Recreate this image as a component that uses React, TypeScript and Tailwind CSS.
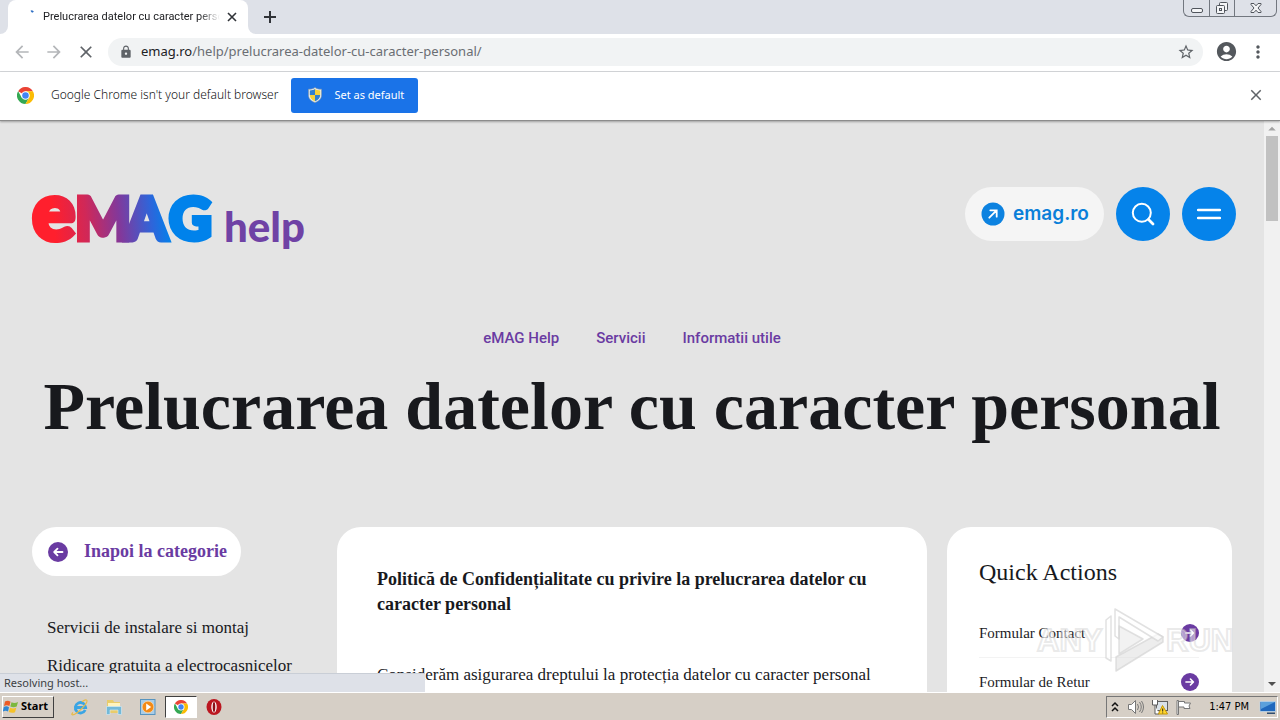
import React from "react";
import {
  MdAccountCircle,
  MdArrowBack,
  MdArrowForward,
  MdClose,
  MdLock,
  MdMoreVert,
  MdStarBorder,
} from "react-icons/md";

const UI = "font-['Noto_Sans',sans-serif]";

function ChromeLogo({ className }: { className: string }) {
  return (
    <svg viewBox="0 0 48 48" className={className} aria-hidden="true">
      <path d="M24 24 3.2 12A24 24 0 0 1 44.8 12L24 12z" fill="#ea4335" />
      <path d="M3.2 12A24 24 0 0 0 24 48L34.4 30 24 24 13.6 30z" fill="#34a853" />
      <path d="M44.8 12A24 24 0 0 1 24 48L34.4 30 24 12z" fill="#fbbc04" />
      <circle cx="24" cy="24" r="12" fill="#fff" />
      <circle cx="24" cy="24" r="9.2" fill="#4285f4" />
    </svg>
  );
}

function Shield() {
  return (
    <svg viewBox="0 0 16 16" className="size-4" aria-hidden="true">
      <path d="M8 0.500C6 2 4 2.200 1.500 2.200V8c0 3.800 2.600 6.200 6.500 7.500 3.900-1.300 6.500-3.700 6.500-7.500V2.200C12 2.200 10 2 8 .5z" fill="#e8eef2" stroke="#8796a3" strokeWidth=".6" />
      <path d="M8 2C6.400 3 5 3.300 2.800 3.400V8H8z" fill="#2f7fd0" />
      <path d="M8 2c1.600 1 3 1.300 5.200 1.400V8H8z" fill="#f6d13a" />
      <path d="M2.800 8c0 3 2 5 5.200 6.200V8z" fill="#f6d13a" />
      <path d="M13.200 8c0 3-2 5-5.200 6.200V8z" fill="#2f7fd0" />
    </svg>
  );
}

function WindowButtons() {
  const box = "flex h-[17px] items-center justify-center border-b border-[#72777f]";
  return (
    <div className="flex self-start text-[#50555c]">
      <button aria-label="Minimize" className={`${box} w-[26px] rounded-bl-md border-l`}>
        <svg viewBox="0 0 24 16" className="h-4 w-6"><rect x="6.500" y="8.500" width="11" height="4" rx="1.500" fill="#f4f5f7" stroke="currentColor" /></svg>
      </button>
      <button aria-label="Restore" className={`${box} w-[25px] border-l`}>
        <svg viewBox="0 0 24 16" className="h-4 w-6" fill="#f4f5f7" stroke="currentColor">
          <rect x="9.500" y="2.500" width="8" height="8" rx="1" />
          <rect x="6.500" y="5.500" width="8" height="8" rx="1" />
          <rect x="9.500" y="8.500" width="2" height="2" />
        </svg>
      </button>
      <button aria-label="Close window" className={`${box} w-[43px] rounded-br-md border-x`}>
        <svg viewBox="0 0 16 16" className="size-4" fill="#f4f5f7" stroke="currentColor">
          <path d="M3 3.500h3l2 2.300 2-2.300h3v1L10 8l3 3.500v1h-3l-2-2.300-2 2.300H3v-1L6 8 3 4.500z" />
        </svg>
      </button>
    </div>
  );
}

function TabStrip() {
  return (
    <div className={`flex h-[34px] items-end bg-[#dee1e8] pr-[3px] ${UI}`}>
      <div className="h-2 w-2 bg-white"><div className="h-2 w-2 rounded-br-lg bg-[#dee1e8]" /></div>
      <div className="flex h-full w-60 items-center rounded-t-lg bg-white pr-1.5 pl-4">
        <svg viewBox="0 0 16 16" className="size-4 shrink-0" fill="none" stroke="#2f6fc4" strokeWidth="2" aria-hidden="true">
          <path d="M7 2.500Q8.200 1.800 9 3.300" />
        </svg>
        <span className="ml-[3px] min-w-0 flex-1 overflow-hidden font-['Roboto',sans-serif] text-[11px] whitespace-nowrap text-[#202124] [mask-image:linear-gradient(to_right,black_88%,transparent)]">
          Prelucrarea datelor cu caracter personal
        </span>
        <button aria-label="Close tab" className="ml-0.5 flex size-5 items-center justify-center text-[#303338]">
          <svg viewBox="0 0 14 14" className="size-3.5" stroke="currentColor" strokeWidth="1.600"><path d="M3 3l8 8M11 3l-8 8" /></svg>
        </button>
      </div>
      <div className="h-2 w-2 bg-white"><div className="h-2 w-2 rounded-bl-lg bg-[#dee1e8]" /></div>
      <button aria-label="New tab" className="ml-1 flex h-full w-5 items-center justify-center text-[#303338]">
        <svg viewBox="0 0 20 20" className="size-5 shrink-0" stroke="currentColor" strokeWidth="2"><path d="M10 4v12M4 10h12" /></svg>
      </button>
      <div className="flex-1" />
      <WindowButtons />
    </div>
  );
}

function Toolbar() {
  return (
    <div className={`flex h-[38px] items-center border-b border-[#d5d7da] bg-white px-3 pb-0.5 ${UI}`}>
      <div className="flex gap-3 text-[#5f6368]">
        <button aria-label="Back" className="text-[#b4b6b9]"><MdArrowBack className="size-5" /></button>
        <button aria-label="Forward" className="text-[#b4b6b9]"><MdArrowForward className="size-5" /></button>
        <button aria-label="Stop"><MdClose className="size-5" /></button>
      </div>
      <div className="ml-3 flex h-7 flex-1 items-center rounded-full bg-[#f1f3f4] pr-2 pl-[11px] text-[13px]">
        <MdLock className="mr-2 size-3.5 text-[#5f6368]" />
        <div role="textbox" aria-label="Address" className="flex-1 text-[#6a6e73]">
          <span className="text-[#202124]">emag.ro</span>/help/prelucrarea-datelor-cu-caracter-personal/
        </div>
        <button aria-label="Bookmark this page" className="text-[#5f6368]"><MdStarBorder className="size-[18px]" /></button>
      </div>
      <button aria-label="Profile" className="ml-3 text-[#54585d]"><MdAccountCircle className="size-[23px]" /></button>
      <button aria-label="Menu" className="ml-2.5 text-[#54585d]"><MdMoreVert className="size-5" /></button>
    </div>
  );
}

function InfoBar() {
  return (
    <div className={`z-10 flex h-[49px] items-center border-b border-[#8c8c8c] bg-white pr-[15px] pb-0.5 pl-[17px] shadow-[0_1px_2px_rgba(0,0,0,0.3)] ${UI}`}>
      <ChromeLogo className="size-[17px]" />
      <p className="mr-[13px] ml-[17px] text-[12px] font-light whitespace-nowrap text-[#101214]">Google Chrome isn't your default browser</p>
      <button className="flex h-[35px] w-[127px] items-center rounded-[3px] bg-[#1a73e8] pl-4 text-[11px] text-white">
        <Shield />
        <span className="ml-[11px] whitespace-nowrap">Set as default</span>
      </button>
      <div className="flex-1" />
      <button aria-label="Dismiss" className="text-[#5f6368]"><MdClose className="size-[18px]" /></button>
    </div>
  );
}

function EmagLogo() {
  return (
    <svg viewBox="0 0 276 60" className="h-[60px] w-[276px] overflow-visible" role="img" aria-label="eMAG help">
      <defs>
        <linearGradient id="brand" gradientUnits="userSpaceOnUse" x1="0" y1="28" x2="180" y2="10">
          <stop offset="0.120" stopColor="#ff1f2d" />
          <stop offset="0.300" stopColor="#d02858" />
          <stop offset="0.480" stopColor="#83389a" />
          <stop offset="0.660" stopColor="#2e65da" />
          <stop offset="0.760" stopColor="#0082eb" />
        </linearGradient>
      </defs>
      <text y="45" fill="url(#brand)" stroke="url(#brand)" strokeWidth="5" fontFamily="Lato, sans-serif" fontWeight="900" fontSize="59">
        <tspan x="0" fontSize="81">e</tspan>
        <tspan x="43">M</tspan>
        <tspan x="94">A</tspan>
        <tspan x="137">G</tspan>
      </text>
      <text x="192" y="47" fill="#6f42a5" fontFamily="Lato, sans-serif" fontWeight="900" fontSize="42">help</text>
    </svg>
  );
}

function ArrowDot({ back = false }: { back?: boolean }) {
  return (
    <svg viewBox="0 0 20 20" className={back ? "size-5 rotate-180" : "size-[18px]"} aria-hidden="true">
      <circle cx="10" cy="10" r="10" fill="#6a3ba2" />
      <path d="M5.500 10h8M10.500 6.700l3.300 3.300-3.300 3.300" fill="none" stroke="#fff" strokeWidth="1.800" strokeLinecap="round" strokeLinejoin="round" />
    </svg>
  );
}

function SiteHeader() {
  return (
    <header className="flex items-start justify-between pt-[66px] pr-7 pl-8">
      <a href="#home" className="pt-2"><EmagLogo /></a>
      <div className="flex gap-3">
        <a href="#emag" className="flex h-[54px] w-[139px] items-center gap-2 rounded-full bg-[#f5f5f5] pl-4 font-['Inter',sans-serif] text-[19px] font-semibold text-[#0a7fd9]">
          <svg viewBox="0 0 24 24" className="size-6" aria-hidden="true">
            <circle cx="12" cy="12" r="11.500" fill="#0c82e0" />
            <path d="M8.300 15.700l7-7M9.300 8.300h6.400v6.400" fill="none" stroke="#fff" strokeWidth="1.800" strokeLinecap="round" />
          </svg>
          <span>emag.ro</span>
        </a>
        <button aria-label="Search" className="flex size-[54px] items-center justify-center rounded-full bg-[#0583ea]">
          <svg viewBox="0 0 24 24" className="size-6" fill="none" stroke="#fff" strokeLinecap="round">
            <circle cx="10.800" cy="10.800" r="9" strokeWidth="2" />
            <path d="M17.500 17.500l4.500 4.500" strokeWidth="2.800" />
          </svg>
        </button>
        <button aria-label="Open menu" className="flex size-[54px] items-center justify-center rounded-full bg-[#0583ea]">
          <svg viewBox="0 0 24 24" className="size-6" stroke="#fff" strokeWidth="2.400" strokeLinecap="round"><path d="M1 8h22M1 16h22" /></svg>
        </button>
      </div>
    </header>
  );
}

function QuickAction({ label }: { label: string }) {
  return (
    <li>
      <a href="#action" className="flex h-[49px] items-center justify-between border-b border-[#f3f3f3] text-[15px] text-[#1c1c1f]">
        {label}
        <ArrowDot />
      </a>
    </li>
  );
}

function Page() {
  return (
    <main className="h-full min-w-0 flex-1 overflow-hidden bg-[#e4e4e4] font-['Liberation_Serif',serif] text-[#18191d]">
      <SiteHeader />
      <nav className="mt-[71px] flex h-6 items-center justify-center gap-[37px] font-['Roboto',sans-serif] text-[15px] font-medium text-[#6a3ba2]">
        <a href="#help">eMAG Help</a>
        <a href="#servicii">Servicii</a>
        <a href="#informatii">Informatii utile</a>
      </nav>
      <h1 className="mt-4 text-center text-[68px] leading-[80px] font-bold whitespace-nowrap">Prelucrarea datelor cu caracter personal</h1>
      <div className="mt-[81px] flex items-start pr-8 pl-8">
        <aside className="w-[305px] shrink-0">
          <a href="#categorie" className="inline-flex h-[49px] items-center gap-4 rounded-full bg-white pr-3.5 pl-4 text-lg font-bold whitespace-nowrap text-[#6a3ba2]">
            <ArrowDot back />
            <span className="pb-0.5">Inapoi la categorie</span>
          </a>
          <ul className="mt-[33px] flex flex-col pl-[15px] text-[17px] whitespace-nowrap">
            <li className="flex h-[38px] items-center"><a href="#instalare">Servicii de instalare si montaj</a></li>
            <li className="flex h-[38px] items-center"><a href="#ridicare">Ridicare gratuita a electrocasnicelor</a></li>
          </ul>
        </aside>
        <article className="h-96 min-w-0 flex-1 rounded-3xl bg-white px-10 pt-10 text-[17px] leading-[25px]">
          <h2 className="text-lg leading-[25px] font-bold">Politică de Confidențialitate cu privire la prelucrarea datelor cu caracter personal</h2>
          <p className="mt-[45px] whitespace-nowrap">Considerăm asigurarea dreptului la protecția datelor cu caracter personal</p>
        </article>
        <section className="ml-5 h-96 w-[285px] shrink-0 rounded-3xl bg-white pt-[27px] pr-[33px] pl-8">
          <h2 className="text-2xl leading-9">Quick Actions</h2>
          <ul className="mt-[19px]">
            <QuickAction label="Formular Contact" />
            <QuickAction label="Formular de Retur" />
          </ul>
        </section>
      </div>
    </main>
  );
}

function ScrollBar() {
  return (
    <div className="flex w-4 shrink-0 flex-col items-center bg-[#f1f1f1]">
      <svg viewBox="0 0 16 16" className="h-[15px] w-4 shrink-0"><path d="M4 10l4-4 4 4z" fill="#a3a3a3" /></svg>
      <div className="h-[85px] w-3 shrink-0 bg-[#c1c1c1]" />
      <div className="flex-1" />
      <svg viewBox="0 0 16 16" className="h-4 w-4 shrink-0"><path d="M4 6l4 4 4-4z" fill="#505050" /></svg>
    </div>
  );
}

function Watermark() {
  return (
    <svg viewBox="0 0 200 64" className="pointer-events-none absolute right-11 bottom-5 h-16 w-[200px] overflow-visible" aria-label="ANY RUN">
      <g fill="#fff" fillOpacity="0.500" stroke="#cfcfcf" strokeOpacity="0.450" strokeWidth="2" fontFamily="'Liberation Sans', sans-serif" fontWeight="700" fontSize="31">
        <text x="1" y="43">ANY</text>
        <text x="130" y="43">RUN</text>
      </g>
      <g stroke="#d4d4d4" strokeOpacity="0.700" strokeWidth="1.500" fill="#fff" fillOpacity="0.700" fillRule="evenodd" strokeLinejoin="round">
        <path d="M80 49v14l47-29v-5l-5-3z" fill="#dcdcdc" fillOpacity="0.500" />
        <path d="M79 1l48 28-5 4-39-24v22l-4-3z" />
        <path d="M70 12l5-4v45l-5-3z" />
        <path d="M83 18v28l24-15z" fill="#d4d4d4" fillOpacity="0.300" />
      </g>
    </svg>
  );
}

function Taskbar() {
  return (
    <footer className="flex h-7 shrink-0 items-center border-t border-white bg-[#d6cfc6] font-['DejaVu_Sans_Condensed','DejaVu_Sans',sans-serif] text-[11px] text-black shadow-[0_-1px_0_#d6d6d6]">
      <button className="ml-0.5 flex h-[22px] w-13 items-center gap-0.5 border border-t-white border-r-[#404040] border-b-[#404040] border-l-white font-['Noto_Sans',sans-serif] text-[11px] font-bold">
        <svg viewBox="0 0 16 16" className="size-4 shrink-0" aria-hidden="true">
          <path d="M2 2.500q3-1.500 5.500.3L6.400 7Q4 5.500 1 7z" fill="#ed5a24" />
          <path d="M8.500 3.200q3 1.600 6.500-.2l-1.300 4.500Q10.500 9 7.300 7.500z" fill="#7cb83e" />
          <path d="M.8 8Q3.500 6.500 6 8.200L5 12.500Q2.500 11-.2 12.500z" fill="#2f86d2" />
          <path d="M7 8.700q3 1.500 6.300 0L12 13.200Q9 14.500 5.800 13z" fill="#f5c22a" />
        </svg>
        Start
      </button>
      <div className="ml-[9px] flex items-center">
        <button aria-label="Internet Explorer" className="flex h-[22px] w-[34px] items-center justify-center">
          <svg viewBox="0 0 18 18" className="size-[18px]" fill="none">
            <path d="M14.200 12A5.200 5.200 0 1 1 14.700 9.500H5" stroke="#3aa5e4" strokeWidth="2.800" />
            <path d="M2 14.500C-1 17.500 2 18 7 14S18 3 15.500 2C14.500 1.500 12 3 11 3.800" stroke="#e8bb45" strokeWidth="1.100" />
          </svg>
        </button>
        <button aria-label="File Explorer" className="flex h-[22px] w-[34px] items-center justify-center">
          <svg viewBox="0 0 18 18" className="size-[18px]">
            <path d="M2 2h6l1 2h6v11H2z" fill="#e9cc6a" />
            <path d="M3 5h12v4H3z" fill="#fff3bd" />
            <path d="M1.500 8.500h15v8h-3.500v-4.500H5v4.500H1.500z" fill="#73b9d8" stroke="#d8edf6" strokeWidth=".6" />
          </svg>
        </button>
        <button aria-label="Media Player" className="flex h-[22px] w-[34px] items-center justify-center">
          <svg viewBox="0 0 18 18" className="size-[18px]">
            <rect x="1.500" y="1.500" width="14.500" height="15" fill="#a9cde8" stroke="#5794bf" />
            <circle cx="9" cy="9" r="5.800" fill="#f28a17" stroke="#ffd6a0" strokeWidth=".7" />
            <path d="M7.200 5.500v7l5-3.500z" fill="#fff" />
          </svg>
        </button>
        <button aria-label="Google Chrome" className="flex h-[22px] w-8 items-center justify-center border border-t-[#404040] border-r-white border-b-white border-l-[#404040] bg-white">
          <ChromeLogo className="size-3.5" />
        </button>
        <button aria-label="Opera" className="flex h-[22px] w-[34px] items-center justify-center">
          <svg viewBox="0 0 18 18" className="size-[18px]">
            <ellipse cx="9" cy="9" rx="7.500" ry="8" fill="#bb1720" />
            <ellipse cx="9" cy="9" rx="2.700" ry="5.500" fill="#fff" />
            <ellipse cx="9" cy="9" rx="1.300" ry="5" fill="#8d1018" />
          </svg>
        </button>
      </div>
      <div className="flex-1" />
      <div className="mr-0.5 flex h-[22px] items-center border border-t-[#777] border-r-white border-b-white border-l-[#777] pl-1">
        <svg viewBox="0 0 8 12" className="h-3 w-2" fill="none" stroke="#111" strokeWidth="1.500"><path d="M1 5l3-3 3 3M1 10l3-3 3 3" /></svg>
        <svg viewBox="0 0 18 18" className="ml-2 size-[18px]" stroke="#777" fill="none">
          <path d="M1.500 6.500h3l4-4v13l-4-4h-3z" fill="#fff" />
          <path d="M10.500 6q2 3 0 6M12.500 4q3.500 5 0 10M14.500 3q4 6 0 12" />
        </svg>
        <svg viewBox="0 0 18 18" className="ml-1.5 size-[18px]" stroke="#5f5f5f">
          <rect x="5.500" y="3.500" width="11" height="9" fill="#d9e1e8" />
          <path d="M1.500 2v5h5V2M4 7v9h4" fill="#fff" />
          <path d="M11.500 7.500l5 8.500h-9z" fill="#ffd62e" stroke="#c59600" />
          <path d="M11.700 10.500v3M11.700 14.500v.8" stroke="#222" />
        </svg>
        <svg viewBox="0 0 18 18" className="ml-1.5 size-[18px]" stroke="#777" fill="#fff">
          <path d="M2 2.500h1.500v14H2zM3.500 3.500h6v1.500h6l-1.500 3 1 2.500H9V9H3.500z" />
        </svg>
        <time className="ml-4 pt-0.5 whitespace-nowrap">1:47 PM</time>
        <svg viewBox="0 0 18 18" className="ml-2.5 size-[18px]">
          <path d="M1 3.500h15.500v10H1z" fill="#1f68bd" stroke="#bfd5e8" strokeWidth=".8" />
          <path d="M2 4h14L2 11z" fill="#5aa0dc" />
          <path d="M8 14.500h8v1.500H8z" fill="#304e70" />
        </svg>
      </div>
    </footer>
  );
}

export default function App() {
  return (
    <div className="flex h-screen flex-col overflow-hidden">
      <TabStrip />
      <Toolbar />
      <InfoBar />
      <div className="relative flex min-h-0 flex-1">
        <Page />
        <ScrollBar />
        <Watermark />
        <div className={`absolute bottom-0 left-0 flex h-[19px] w-[425px] items-center border-t border-[#c9ced6] bg-[#dee1e8] pl-1 text-[11px] text-[#3c4043] ${UI}`}>
          Resolving host...
        </div>
      </div>
      <Taskbar />
    </div>
  );
}
